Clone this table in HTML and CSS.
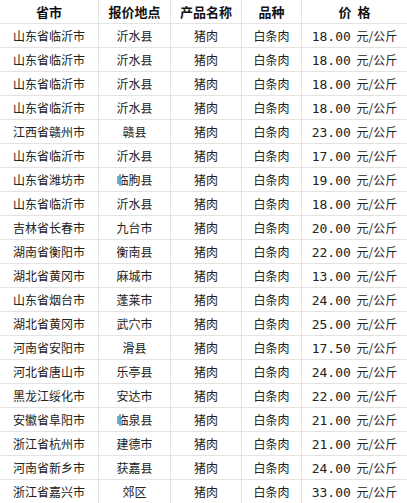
FILE: index.html
```html
<!DOCTYPE html>
<html lang="zh-CN">
<head>
<meta charset="utf-8">
<title>猪肉价格</title>
<link rel="stylesheet" href="styles.css">
</head>
<body>
<table class="price-table">
  <colgroup>
    <col class="c1"><col class="c2"><col class="c3"><col class="c4"><col class="c5">
  </colgroup>
  <thead>
    <tr><th>省市</th><th>报价地点</th><th>产品名称</th><th>品种</th><th>价&nbsp;&nbsp;格</th></tr>
  </thead>
  <tbody>
    <tr><td>山东省临沂市</td><td>沂水县</td><td>猪肉</td><td>白条肉</td><td><span class="num">18.00</span> 元/公斤</td></tr>
    <tr><td>山东省临沂市</td><td>沂水县</td><td>猪肉</td><td>白条肉</td><td><span class="num">18.00</span> 元/公斤</td></tr>
    <tr><td>山东省临沂市</td><td>沂水县</td><td>猪肉</td><td>白条肉</td><td><span class="num">18.00</span> 元/公斤</td></tr>
    <tr><td>山东省临沂市</td><td>沂水县</td><td>猪肉</td><td>白条肉</td><td><span class="num">18.00</span> 元/公斤</td></tr>
    <tr><td>江西省赣州市</td><td>赣县</td><td>猪肉</td><td>白条肉</td><td><span class="num">23.00</span> 元/公斤</td></tr>
    <tr><td>山东省临沂市</td><td>沂水县</td><td>猪肉</td><td>白条肉</td><td><span class="num">17.00</span> 元/公斤</td></tr>
    <tr><td>山东省潍坊市</td><td>临朐县</td><td>猪肉</td><td>白条肉</td><td><span class="num">19.00</span> 元/公斤</td></tr>
    <tr><td>山东省临沂市</td><td>沂水县</td><td>猪肉</td><td>白条肉</td><td><span class="num">18.00</span> 元/公斤</td></tr>
    <tr><td>吉林省长春市</td><td>九台市</td><td>猪肉</td><td>白条肉</td><td><span class="num">20.00</span> 元/公斤</td></tr>
    <tr><td>湖南省衡阳市</td><td>衡南县</td><td>猪肉</td><td>白条肉</td><td><span class="num">22.00</span> 元/公斤</td></tr>
    <tr><td>湖北省黄冈市</td><td>麻城市</td><td>猪肉</td><td>白条肉</td><td><span class="num">13.00</span> 元/公斤</td></tr>
    <tr><td>山东省烟台市</td><td>蓬莱市</td><td>猪肉</td><td>白条肉</td><td><span class="num">24.00</span> 元/公斤</td></tr>
    <tr><td>湖北省黄冈市</td><td>武穴市</td><td>猪肉</td><td>白条肉</td><td><span class="num">25.00</span> 元/公斤</td></tr>
    <tr><td>河南省安阳市</td><td>滑县</td><td>猪肉</td><td>白条肉</td><td><span class="num">17.50</span> 元/公斤</td></tr>
    <tr><td>河北省唐山市</td><td>乐亭县</td><td>猪肉</td><td>白条肉</td><td><span class="num">24.00</span> 元/公斤</td></tr>
    <tr><td>黑龙江绥化市</td><td>安达市</td><td>猪肉</td><td>白条肉</td><td><span class="num">22.00</span> 元/公斤</td></tr>
    <tr><td>安徽省阜阳市</td><td>临泉县</td><td>猪肉</td><td>白条肉</td><td><span class="num">21.00</span> 元/公斤</td></tr>
    <tr><td>浙江省杭州市</td><td>建德市</td><td>猪肉</td><td>白条肉</td><td><span class="num">21.00</span> 元/公斤</td></tr>
    <tr><td>河南省新乡市</td><td>获嘉县</td><td>猪肉</td><td>白条肉</td><td><span class="num">24.00</span> 元/公斤</td></tr>
    <tr><td>浙江省嘉兴市</td><td>郊区</td><td>猪肉</td><td>白条肉</td><td><span class="num">33.00</span> 元/公斤</td></tr>
  </tbody>
</table>
</body>
</html>
```
FILE: styles.css
```css
html, body {
  margin: 0;
  padding: 0;
  background: #fff;
}
body {
  font-family: "Noto Sans CJK SC", "Noto Sans", sans-serif;
  color: #222;
}
.price-table {
  border-collapse: collapse;
  table-layout: fixed;
  width: 408px;
  margin: -1px 0 0 -1px;
}
.c1 { width: 99px; }
.c2 { width: 72px; }
.c3 { width: 71px; }
.c4 { width: 60px; }
.c5 { width: 106px; }
.price-table th,
.price-table td {
  border: 1px solid #e3e3e3;
  padding: 0;
  height: 23px;
  line-height: 18px;
  vertical-align: middle;
  text-align: center;
  white-space: nowrap;
  overflow: hidden;
}
.price-table th {
  font-size: 13px;
  font-weight: bold;
  color: #111;
}
.price-table td {
  font-size: 12px;
}
.num {
  font-family: "DejaVu Sans Mono", "Liberation Mono", monospace;
  font-size: 13px;
  line-height: 16px;
  margin-right: 3px;
}
```
